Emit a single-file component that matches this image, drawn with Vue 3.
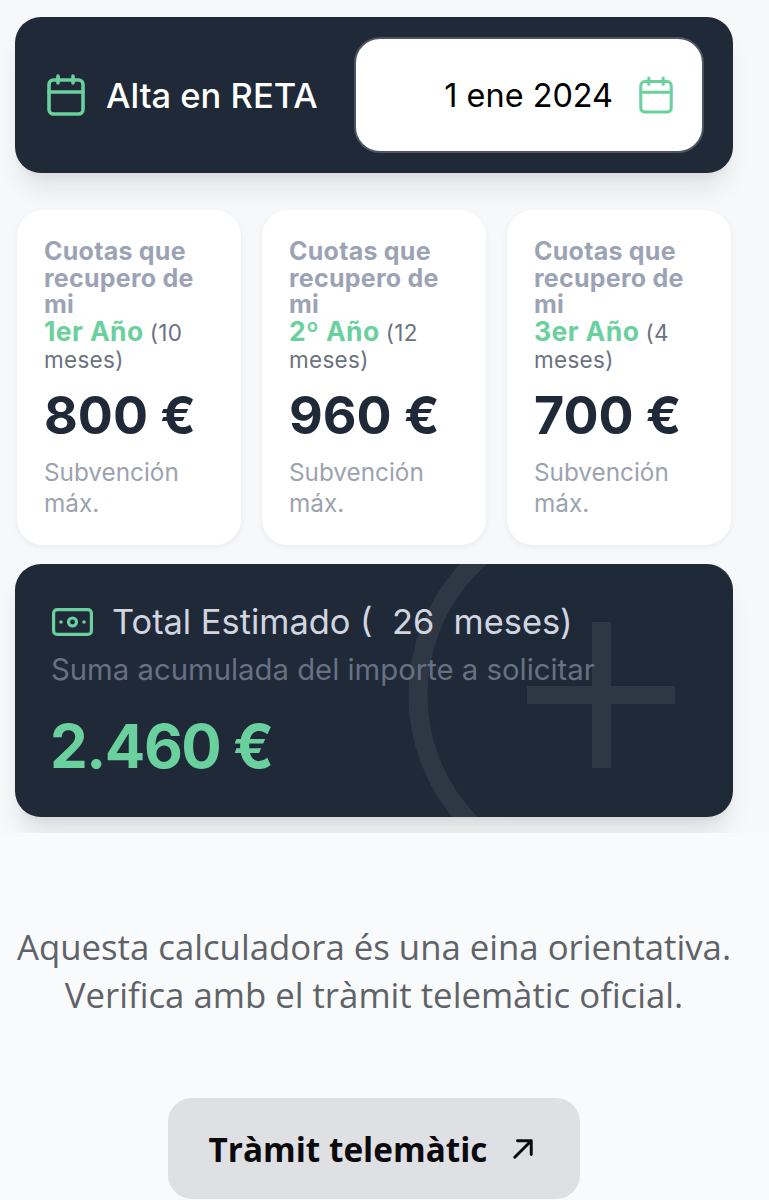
<template>
  <div class="page">
    <section class="top">
      <header class="reta">
        <div class="reta-label">
          <svg class="cal" viewBox="0 0 38 42" fill="none" stroke="#6ad09d" stroke-width="3.6" stroke-linejoin="round" stroke-linecap="round">
            <rect x="2" y="6" width="34" height="34" rx="4.5" />
            <path d="M2 18H36M11 2V9M26 2V9" />
          </svg>
          <span>Alta en RETA</span>
        </div>
        <div class="date">
          <span>1 ene 2024</span>
          <svg class="cal small" viewBox="0 0 38 42" fill="none" stroke="#6ad09d" stroke-width="3.4" stroke-linejoin="round" stroke-linecap="round">
            <rect x="2" y="6" width="34" height="34" rx="4.5" />
            <path d="M2 18H36M11 2V9M27 2V9" />
          </svg>
        </div>
      </header>

      <div class="cards">
        <article v-for="c in cards" :key="c.year" class="card">
          <p class="c-title">Cuotas que recupero de mi<br /><em>{{ c.year }}</em> <span>({{ c.months }} meses)</span></p>
          <p class="c-amount">{{ c.amount }} €</p>
          <p class="c-note">Subvención máx.</p>
        </article>
      </div>

      <div class="total">
        <svg class="deco" viewBox="0 0 718 253" aria-hidden="true">
          <g opacity=".07">
            <circle cx="586" cy="131" r="183" fill="none" stroke="#fff" stroke-width="19" />
            <path d="M577 58h19v64h64v18h-64v64h-19v-64h-65v-18h65z" fill="#fff" />
          </g>
        </svg>
        <div class="t-head">
          <svg class="cash" viewBox="0 0 41 28" fill="none" stroke="#6ad09d" stroke-width="3.2" stroke-linejoin="round">
            <rect x="1.6" y="1.6" width="37.8" height="24.8" rx="3.5" />
            <circle cx="20.5" cy="14" r="4" />
            <circle cx="9" cy="14" r="1.8" fill="#6ad09d" stroke="none" />
            <circle cx="32" cy="14" r="1.8" fill="#6ad09d" stroke="none" />
          </svg>
          <span>Total Estimado ( &nbsp;26 &nbsp;meses)</span>
        </div>
        <p class="t-sub">Suma acumulada del importe a solicitar</p>
        <p class="t-amount">2.460 €</p>
      </div>
    </section>

    <section class="bottom">
      <p class="disclaimer">Aquesta calculadora és una eina orientativa.<br />Verifica amb el tràmit telemàtic oficial.</p>
      <a class="btn">
        <span>Tràmit telemàtic</span>
        <svg class="arrow" viewBox="0 0 24 24" fill="none" stroke="#0b0b0d" stroke-width="3.2" stroke-linecap="round" stroke-linejoin="round">
          <path d="M3 21 21 3M6 3H21V18" />
        </svg>
      </a>
    </section>
  </div>
</template>

<script setup>
const cards = [
  { year: '1er Año', months: 10, amount: 800 },
  { year: '2º Año', months: 12, amount: 960 },
  { year: '3er Año', months: 4, amount: 700 },
]
</script>

<style>
html, body { margin: 0; background: #f9fafc; }
</style>

<style scoped>
.page {
  width: 769px;
  height: 1200px;
  overflow: hidden;
  background: #f9fafc;
  font-family: Inter, "Liberation Sans", sans-serif;
}
.top {
  box-sizing: border-box;
  height: 833px;
  padding: 17px 36px 0 15px;
  overflow: hidden;
  background: #f7f8fa;
}
.reta {
  box-sizing: border-box;
  width: 718px;
  height: 156px;
  padding: 20px 29px 20px 32px;
  display: flex;
  align-items: center;
  justify-content: space-between;
  background: #1f2937;
  border-radius: 26px;
  box-shadow: 0 20px 25px -5px rgba(0, 0, 0, .09), 0 8px 10px -6px rgba(0, 0, 0, .05);
}
.reta-label {
  display: flex;
  align-items: center;
  gap: 21px;
  color: #fff;
  font-size: 34.5px;
  font-weight: 500;
}
.cal { width: 38px; height: 42px; display: block; }
.cal.small { width: 34px; height: 38px; }
.date {
  box-sizing: border-box;
  width: 350px;
  height: 116px;
  padding-right: 29px;
  display: flex;
  align-items: center;
  justify-content: flex-end;
  gap: 26px;
  background: #fff;
  border: 2px solid #4b5563;
  border-radius: 26px;
  color: #000;
  font-size: 32.4px;
}
.cards {
  margin: 37px 2px 19px;
  display: grid;
  grid-template-columns: repeat(3, 224px);
  gap: 21px;
}
.card {
  box-sizing: border-box;
  height: 335px;
  padding: 28px 20px 0 27px;
  background: #fff;
  border-radius: 26px;
  box-shadow: 0 2px 6px rgba(31, 41, 55, .06);
}
.card p { margin: 0; }
.c-title {
  color: #9ca3b5;
  font-size: 25px;
  font-weight: 700;
  letter-spacing: .25px;
  line-height: 26.6px;
}
.c-title em {
  color: #6ad09d;
  font-size: 26.5px;
  font-style: normal;
  letter-spacing: .4px;
}
.c-title span {
  color: #6b7280;
  font-size: 22.5px;
  font-weight: 400;
  letter-spacing: .3px;
}
.c-amount {
  margin-top: 9px !important;
  color: #1f2937;
  font-size: 52px;
  font-weight: 700;
  line-height: 66px;
}
.c-note {
  margin-top: 8px !important;
  color: #9ca3af;
  font-size: 24.3px;
  line-height: 31px;
}
.total {
  position: relative;
  box-sizing: border-box;
  width: 718px;
  height: 253px;
  padding: 34px 36px 0;
  overflow: hidden;
  background: #1f2937;
  border-radius: 26px;
  box-shadow: 0 20px 25px -5px rgba(0, 0, 0, .1), 0 8px 10px -6px rgba(0, 0, 0, .06);
}
.deco { position: absolute; inset: 0; width: 718px; height: 253px; }
.t-head {
  position: relative;
  display: flex;
  align-items: center;
  gap: 19px;
  margin-left: 1px;
  color: #d1d5e0;
  font-size: 34.4px;
  line-height: 48px;
}
.cash { width: 41px; height: 28px; display: block; }
.t-sub {
  position: relative;
  margin: 5px 0 0;
  color: #687084;
  font-size: 29.3px;
  line-height: 38px;
}
.t-amount {
  position: relative;
  margin: 25px 0 0 -1px;
  color: #6ad09d;
  font-size: 60px;
  font-weight: 700;
  letter-spacing: -1.5px;
  line-height: 64px;
}
.bottom {
  width: 748px;
  display: flex;
  flex-direction: column;
  align-items: center;
}
.disclaimer {
  margin: 90px 0 0;
  color: #5f6368;
  font-family: "Open Sans", sans-serif;
  font-size: 34.75px;
  line-height: 48px;
  text-align: center;
  white-space: nowrap;
}
.btn {
  box-sizing: border-box;
  width: 412px;
  height: 101px;
  margin-top: 79px;
  padding-right: 5px;
  display: flex;
  align-items: center;
  justify-content: center;
  gap: 25px;
  background: #dfe0e3;
  border-radius: 24px;
  color: #0b0b0d;
  font-family: "Open Sans", sans-serif;
  font-size: 33.3px;
  font-weight: 700;
}
.arrow { width: 22px; height: 22px; }
</style>
